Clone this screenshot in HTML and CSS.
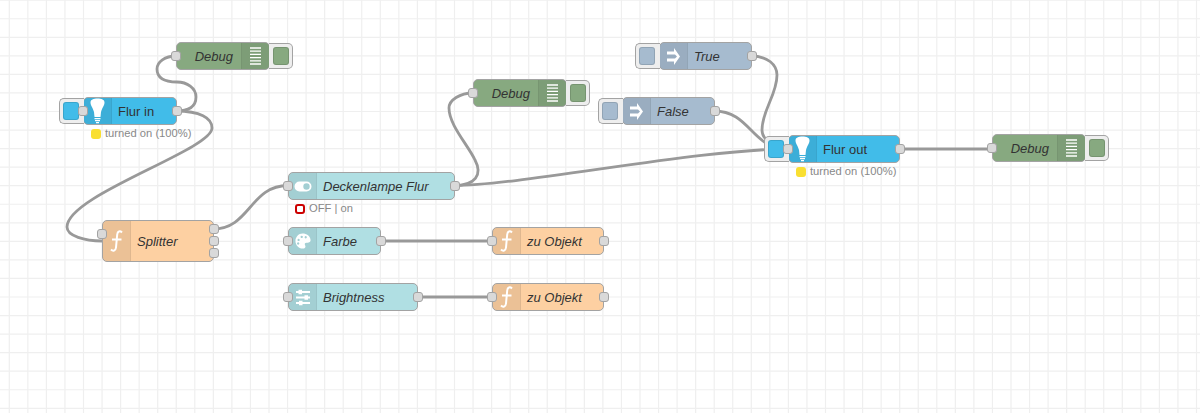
FILE: index.html
```html
<!DOCTYPE html>
<html lang="en">
<head>
  <meta charset="UTF-8">
  <title>Flow editor</title>
  <link rel="stylesheet" href="styles.css">
</head>
<body>
  <div class="workspace">
    <!-- grid lines, the editor is zoomed out so the step is not a whole pixel -->
    <svg class="grid" width="1200" height="413">
      <path d="M9.3 0V413M27.85 0V413M46.4 0V413M64.95 0V413M83.5 0V413M102.05 0V413M120.6 0V413M139.15 0V413M157.7 0V413M176.25 0V413M194.8 0V413M213.35 0V413M231.9 0V413M250.45 0V413M269 0V413M287.55 0V413M306.1 0V413M324.65 0V413M343.2 0V413M361.75 0V413M380.3 0V413M398.85 0V413M417.4 0V413M435.95 0V413M454.5 0V413M473.05 0V413M491.6 0V413M510.15 0V413M528.7 0V413M547.25 0V413M565.8 0V413M584.35 0V413M602.9 0V413M621.45 0V413M640 0V413M658.55 0V413M677.1 0V413M695.65 0V413M714.2 0V413M732.75 0V413M751.3 0V413M769.85 0V413M788.4 0V413M806.95 0V413M825.5 0V413M844.05 0V413M862.6 0V413M881.15 0V413M899.7 0V413M918.25 0V413M936.8 0V413M955.35 0V413M973.9 0V413M992.45 0V413M1011 0V413M1029.55 0V413M1048.1 0V413M1066.65 0V413M1085.2 0V413M1103.75 0V413M1122.3 0V413M1140.85 0V413M1159.4 0V413M1177.95 0V413M1196.5 0V413"/>
      <path d="M0 0.2H1200M0 18.75H1200M0 37.3H1200M0 55.85H1200M0 74.4H1200M0 92.95H1200M0 111.5H1200M0 130.05H1200M0 148.6H1200M0 167.15H1200M0 185.7H1200M0 204.25H1200M0 222.8H1200M0 241.35H1200M0 259.9H1200M0 278.45H1200M0 297H1200M0 315.55H1200M0 334.1H1200M0 352.65H1200M0 371.2H1200M0 389.75H1200M0 408.3H1200"/>
    </svg>

    <svg class="wires" width="1200" height="413">
      <path d="M176 111 C190 111 196 106 196 97 C196 88 187 82 177 82 C165 82 157 78 157 69 C157 62 165 56 176 56"/>
      <path d="M176 111 C200 111 212 118 212 128 C212 150 67 195 67 227 C67 236 85 241 102 241"/>
      <path d="M213 229 C250 229 250 185.500 288 185.500"/>
      <path d="M454 185.500 C475 185.500 483 175 475 160 C468 145 449 125 449 108 C449 100 460 93 473 93"/>
      <path d="M454 185.500 C520 185.500 700 149 788 149"/>
      <path d="M751 56 C768 56 777 65 777 75 C777 95 762 110 762 130 C762 140 775 149 788 149"/>
      <path d="M714 111 C751 111 751 149 788 149"/>
      <path d="M900 149 L992 149"/>
      <path d="M380 241 L492 241"/>
      <path d="M417 297 L492 297"/>
    </svg>

    <!-- icons -->
    <svg class="defs" width="0" height="0">
      <symbol id="i-debug" viewBox="0 0 11 18">
        <path d="M0 1H11M0 4.200H11M0 7.400H11M0 10.600H11M0 13.800H11M0 17H11" stroke="#fff" stroke-width="1.300" fill="none"/>
      </symbol>
      <symbol id="i-bulb" viewBox="0 0 15 26">
        <path d="M0.500 4.500 C0.500 1.500 3.500 0.500 7.500 0.500 C11.500 0.500 14.500 1.500 14.500 4.500 C14.500 7.500 12.500 9 11 14 L10.500 19 H4.500 L4 14 C2.500 9 0.500 7.500 0.500 4.500 Z" fill="#fff"/>
        <path d="M4.500 20.600H10.500M5 22.600H10M6 24.600H9" stroke="#fff" stroke-width="1.200" fill="none"/>
      </symbol>
      <symbol id="i-func" viewBox="0 0 15 22">
        <path d="M13 2.500 C11 0.500 8.500 1 8.200 4.500 L7 17.500 C6.700 20.800 4 21.500 2 19.500 M3 9.500 H12.500" stroke="#fff" stroke-width="2" fill="none"/>
      </symbol>
      <symbol id="i-link" viewBox="0 0 13 17">
        <path d="M0 3.500H7V0L13 8.500L7 17V13.500H0V10.500H8L10 8.500L8 6.500H0Z" fill="#fff"/>
      </symbol>
      <symbol id="i-toggle" viewBox="0 0 18 11">
        <path fill-rule="evenodd" fill="#fff" d="M5.500 0.500H12.500A5 5 0 0 1 12.500 10.500H5.500A5 5 0 0 1 5.500 0.500ZM12.500 2.300A3.200 3.200 0 1 0 12.500 8.700A3.200 3.200 0 1 0 12.500 2.300Z"/>
      </symbol>
      <symbol id="i-palette" viewBox="0 0 18 18">
        <path fill-rule="evenodd" fill="#fff" d="M8.500 0.500 C13 0.500 17.500 3.500 17.500 8 C17.500 11 15 11 13 11 C11 11 10.500 12.500 11.500 14 C12.500 16 11 17.500 8.500 17.500 C4 17.500 0.500 13.500 0.500 9 C0.500 4.500 4 0.500 8.500 0.500 Z M4 6.500 a1.300 1.300 0 1 0 0.100 0 Z M7.500 3 a1.300 1.300 0 1 0 0.100 0 Z M12 3.500 a1.300 1.300 0 1 0 0.100 0 Z M3.500 10.500 a1.300 1.300 0 1 0 0.100 0 Z"/>
      </symbol>
      <symbol id="i-sliders" viewBox="0 0 14 17">
        <path d="M0 3H14M0 8.500H14M0 14H14" stroke="#fff" stroke-width="1.800" fill="none"/>
        <path d="M2.500 0.800H6V5.200H2.500ZM8.500 6.300H12V10.700H8.500ZM3 11.800H6.500V16.200H3Z" fill="#fff"/>
      </symbol>
    </svg>

    <!-- top left -->
    <div class="node debug debug-a">
      <button class="btn btn-right"><i></i></button>
      <span class="port port-left"></span>
      <span class="label ital label-r">Debug</span>
      <span class="tab tab-right"><svg class="ic-debug"><use href="#i-debug"/></svg></span>
    </div>

    <div class="node hue flur-in">
      <button class="btn btn-left"><i></i></button>
      <span class="port port-left"></span>
      <span class="port port-right"></span>
      <span class="tab"><svg class="ic-bulb"><use href="#i-bulb"/></svg></span>
      <span class="label">Flur in</span>
      <div class="status"><b class="dot dot-yellow"></b>turned on (100%)</div>
    </div>

    <div class="node func splitter">
      <span class="port port-left"></span>
      <span class="port port-out1"></span>
      <span class="port port-out2"></span>
      <span class="port port-out3"></span>
      <span class="tab"><svg class="ic-func"><use href="#i-func"/></svg></span>
      <span class="label ital">Splitter</span>
    </div>

    <!-- middle column -->
    <div class="node ui lampe">
      <span class="port port-left"></span>
      <span class="port port-right"></span>
      <span class="tab"><svg class="ic-toggle"><use href="#i-toggle"/></svg></span>
      <span class="label ital">Deckenlampe Flur</span>
      <div class="status"><b class="dot dot-red"></b>OFF | on</div>
    </div>

    <div class="node ui farbe">
      <span class="port port-left"></span>
      <span class="port port-right"></span>
      <span class="tab"><svg class="ic-palette"><use href="#i-palette"/></svg></span>
      <span class="label ital">Farbe</span>
    </div>

    <div class="node ui brightness">
      <span class="port port-left"></span>
      <span class="port port-right"></span>
      <span class="tab"><svg class="ic-sliders"><use href="#i-sliders"/></svg></span>
      <span class="label ital">Brightness</span>
    </div>

    <div class="node func objekt-a">
      <span class="port port-left"></span>
      <span class="port port-right"></span>
      <span class="tab"><svg class="ic-func"><use href="#i-func"/></svg></span>
      <span class="label ital">zu Objekt</span>
    </div>

    <div class="node func objekt-b">
      <span class="port port-left"></span>
      <span class="port port-right"></span>
      <span class="tab"><svg class="ic-func"><use href="#i-func"/></svg></span>
      <span class="label ital">zu Objekt</span>
    </div>

    <div class="node debug debug-b">
      <button class="btn btn-right"><i></i></button>
      <span class="port port-left"></span>
      <span class="label ital label-r">Debug</span>
      <span class="tab tab-right"><svg class="ic-debug"><use href="#i-debug"/></svg></span>
    </div>

    <!-- right side -->
    <div class="node link link-true">
      <button class="btn btn-left"><i></i></button>
      <span class="port port-right"></span>
      <span class="tab"><svg class="ic-link"><use href="#i-link"/></svg></span>
      <span class="label ital">True</span>
    </div>

    <div class="node link link-false">
      <button class="btn btn-left"><i></i></button>
      <span class="port port-right"></span>
      <span class="tab"><svg class="ic-link"><use href="#i-link"/></svg></span>
      <span class="label ital">False</span>
    </div>

    <div class="node hue flur-out">
      <button class="btn btn-left"><i></i></button>
      <span class="port port-left"></span>
      <span class="port port-right"></span>
      <span class="tab"><svg class="ic-bulb"><use href="#i-bulb"/></svg></span>
      <span class="label">Flur out</span>
      <div class="status"><b class="dot dot-yellow"></b>turned on (100%)</div>
    </div>

    <div class="node debug debug-c">
      <button class="btn btn-right"><i></i></button>
      <span class="port port-left"></span>
      <span class="label ital label-r">Debug</span>
      <span class="tab tab-right"><svg class="ic-debug"><use href="#i-debug"/></svg></span>
    </div>
  </div>
</body>
</html>
```

FILE: styles.css
```css
body {
  margin: 0;
  background: #fff;
  font-family: "Liberation Sans", Arial, sans-serif;
  color: #333;
}

/* Canvas */
.workspace {
  position: relative;
  width: 1200px;
  height: 413px;
  overflow: hidden;
}

.grid,
.wires {
  position: absolute;
  left: 0;
  top: 0;
}
.grid path {
  fill: none;
  stroke: #efefef;
  stroke-width: 1.2;
}
.wires path {
  fill: none;
  stroke: #999;
  stroke-width: 2.8;
}
.defs {
  position: absolute;
}

/* Nodes */
.node {
  position: absolute;
  box-sizing: border-box;
  height: 28px;
  display: flex;
  align-items: center;
  border: 1px solid #a3a3a3;
  border-radius: 5px;
}
.debug { background: #87a980; }
.hue { background: #41bce9; }
.func { background: #fdd0a2; }
.ui { background: #b0dfe3; }
.link { background: #a6bbcf; }

.debug-a { left: 176px; top: 42px; width: 94px; }
.debug-b { left: 473px; top: 79px; width: 94px; }
.debug-c { left: 992px; top: 134px; width: 94px; }
.flur-in { left: 83px; top: 97px; width: 94px; }
.flur-out { left: 788px; top: 135px; width: 112px; }
.splitter { left: 102px; top: 220px; width: 112px; height: 42px; }
.lampe { left: 288px; top: 172px; width: 167px; }
.farbe { left: 288px; top: 227px; width: 93px; }
.brightness { left: 288px; top: 283px; width: 130px; }
.objekt-a { left: 492px; top: 227px; width: 112px; }
.objekt-b { left: 492px; top: 283px; width: 112px; }
.link-true { left: 659px; top: 42px; width: 93px; }
.link-false { left: 622px; top: 97px; width: 93px; }

.tab {
  flex: none;
  width: 27px;
  height: 100%;
  display: flex;
  align-items: center;
  justify-content: center;
  background: rgba(0, 0, 0, 0.07);
  border-right: 1px solid rgba(0, 0, 0, 0.05);
  border-radius: 4px 0 0 4px;
}
.tab-right {
  border-right: none;
  border-left: 1px solid rgba(0, 0, 0, 0.05);
  border-radius: 0 4px 4px 0;
}

.label {
  flex: 1;
  padding-left: 6px;
  font-size: 13px;
  white-space: nowrap;
}
.ital { font-style: italic; }
.label-r {
  padding-left: 0;
  padding-right: 8px;
  text-align: right;
}

/* Ports */
.port {
  position: absolute;
  box-sizing: border-box;
  width: 10px;
  height: 10px;
  background: #d9d9d9;
  border: 1px solid #a3a3a3;
  border-radius: 3px;
}
.port-left { left: -6px; top: 8px; }
.port-right { right: -6px; top: 8px; }
.port-out1 { right: -6px; top: 3px; }
.port-out2 { right: -6px; top: 15px; }
.port-out3 { right: -6px; top: 27px; }

/* Inject and debug buttons */
.btn {
  position: absolute;
  box-sizing: border-box;
  top: 0;
  height: 26px;
  padding: 0;
  background: #eee;
  border: 1px solid #a3a3a3;
  display: flex;
  align-items: center;
}
.btn-left {
  left: -25px;
  width: 25px;
  padding-left: 3px;
  border-right: none;
  border-radius: 5px 0 0 5px;
}
.btn-right {
  right: -24px;
  width: 24px;
  justify-content: center;
  border-left: none;
  border-radius: 0 5px 5px 0;
}
.btn i {
  display: block;
  box-sizing: border-box;
  width: 16px;
  height: 18px;
  border: 1px solid rgba(0, 0, 0, 0.12);
  border-radius: 3px;
}
.debug .btn i { background: #87a980; }
.hue .btn i { background: #41bce9; }
.link .btn i { background: #a6bbcf; }

/* Status line under a node */
.status {
  position: absolute;
  left: 7px;
  top: 29px;
  display: flex;
  align-items: center;
  gap: 4px;
  font-size: 11.200px;
  line-height: 13px;
  color: #888;
  white-space: nowrap;
}
.lampe .status { left: 6px; }
.dot {
  box-sizing: border-box;
  width: 10px;
  height: 10px;
  border-radius: 3px;
}
.dot-yellow { background: #f9df31; }
.dot-red { background: #fff; border: 2.500px solid #c00; }

/* Icon sizes */
.ic-debug { width: 11px; height: 18px; }
.ic-bulb { width: 15px; height: 26px; }
.ic-func { width: 15px; height: 22px; }
.ic-link { width: 13px; height: 17px; }
.ic-toggle { width: 18px; height: 11px; }
.ic-palette { width: 16px; height: 16px; }
.ic-sliders { width: 14px; height: 17px; }
```
